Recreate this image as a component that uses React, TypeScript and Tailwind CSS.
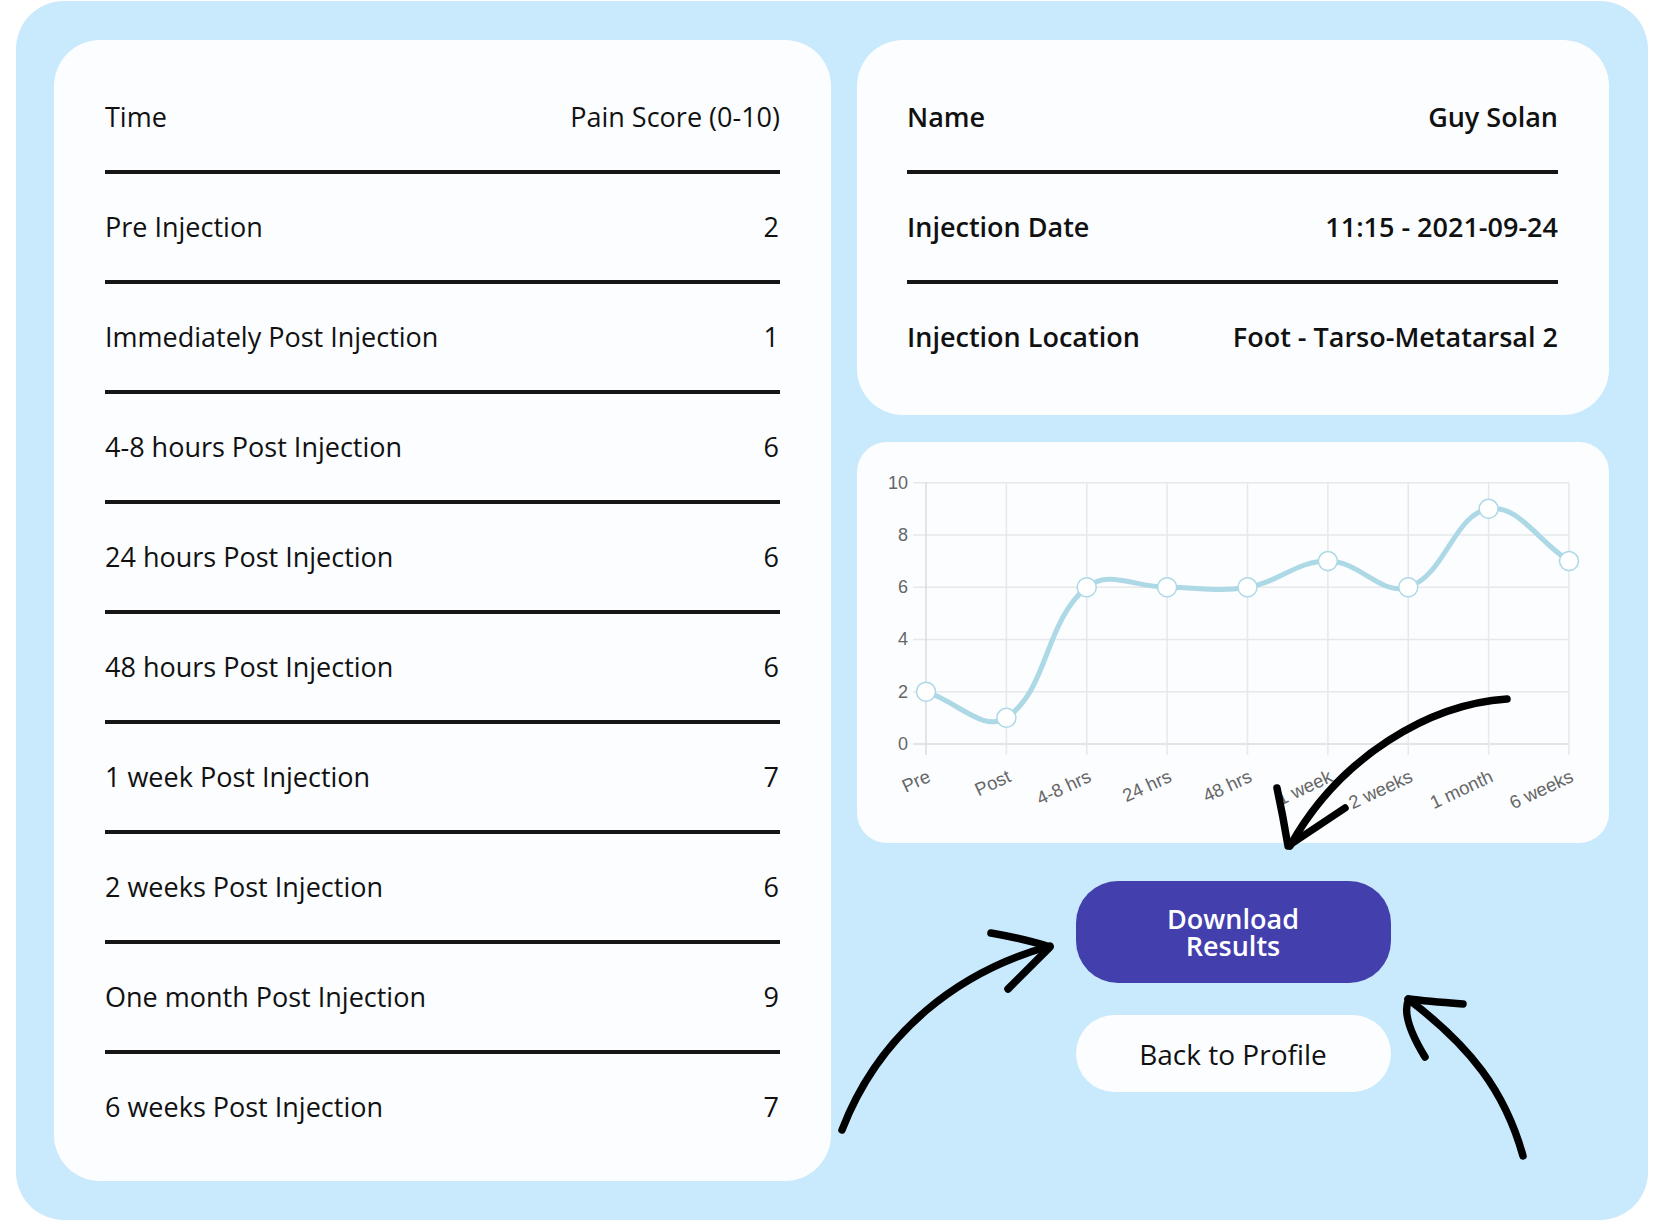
import React from "react";

type Row = { label: string; score: number };

const ROWS: Row[] = [
  { label: "Pre Injection", score: 2 },
  { label: "Immediately Post Injection", score: 1 },
  { label: "4-8 hours Post Injection", score: 6 },
  { label: "24 hours Post Injection", score: 6 },
  { label: "48 hours Post Injection", score: 6 },
  { label: "1 week Post Injection", score: 7 },
  { label: "2 weeks Post Injection", score: 6 },
  { label: "One month Post Injection", score: 9 },
  { label: "6 weeks Post Injection", score: 7 },
];

const INFO = [
  { label: "Name", value: "Guy Solan" },
  { label: "Injection Date", value: "11:15 - 2021-09-24" },
  { label: "Injection Location", value: "Foot - Tarso-Metatarsal 2" },
];

const LABELS = ["Pre", "Post", "4-8 hrs", "24 hrs", "48 hrs", "1 week", "2 weeks", "1 month", "6 weeks"];

// chart geometry, in px relative to the chart card
const X0 = 69;
const STEP_X = 80.375;
const Y0 = 302;
const UNIT_Y = 26.13;

type Pt = { x: number; y: number };

function controlPoints(prev: Pt, cur: Pt, next: Pt, t: number) {
  const d01 = Math.hypot(cur.x - prev.x, cur.y - prev.y);
  const d12 = Math.hypot(next.x - cur.x, next.y - cur.y);
  const s01 = d01 + d12 === 0 ? 0 : d01 / (d01 + d12);
  const s12 = d01 + d12 === 0 ? 0 : d12 / (d01 + d12);
  const fa = t * s01;
  const fb = t * s12;
  return {
    before: { x: cur.x - fa * (next.x - prev.x), y: cur.y - fa * (next.y - prev.y) },
    after: { x: cur.x + fb * (next.x - prev.x), y: cur.y + fb * (next.y - prev.y) },
  };
}

function PainChart() {
  const pts: Pt[] = ROWS.map((r, i) => ({ x: X0 + i * STEP_X, y: Y0 - r.score * UNIT_Y }));
  const cps = pts.map((p, i) =>
    controlPoints(pts[i - 1] ?? p, p, pts[i + 1] ?? p, 0.4)
  );
  let d = `M${pts[0].x} ${pts[0].y}`;
  for (let i = 1; i < pts.length; i++) {
    const a = cps[i - 1].after;
    const b = cps[i].before;
    d += ` C${a.x} ${a.y} ${b.x} ${b.y} ${pts[i].x} ${pts[i].y}`;
  }
  const xEnd = X0 + 8 * STEP_X;

  return (
    <svg width="752" height="401" viewBox="0 0 752 401" className="block">
      {[0, 2, 4, 6, 8, 10].map((v) => (
        <g key={v}>
          <line
            x1={56}
            x2={xEnd}
            y1={Y0 - v * UNIT_Y}
            y2={Y0 - v * UNIT_Y}
            stroke={v === 0 ? "#d9dcdf" : "#e6e8ea"}
            strokeWidth={1.5}
          />
          <text
            x={51}
            y={Y0 - v * UNIT_Y}
            textAnchor="end"
            dominantBaseline="central"
            fontSize="18"
            fill="#666"
            fontFamily="'Liberation Sans', Arial, sans-serif"
          >
            {v}
          </text>
        </g>
      ))}
      {pts.map((p, i) => (
        <line
          key={i}
          x1={p.x}
          x2={p.x}
          y1={Y0 - 10 * UNIT_Y}
          y2={Y0 + 11}
          stroke={i === 0 ? "#d9dcdf" : "#e6e8ea"}
          strokeWidth={1.5}
        />
      ))}
      {LABELS.map((l, i) => (
        <text
          key={l}
          transform={`translate(${X0 + i * STEP_X + 3} ${Y0 + 31}) rotate(-25)`}
          textAnchor="end"
          dominantBaseline="central"
          fontSize="18.5"
          fill="#666"
          fontFamily="'Liberation Sans', Arial, sans-serif"
        >
          {l}
        </text>
      ))}
      <path d={d} fill="none" stroke="#add8e6" strokeWidth={5} strokeLinejoin="round" />
      {pts.map((p, i) => (
        <circle key={i} cx={p.x} cy={p.y} r={9.5} fill="#fff" stroke="#add8e6" strokeWidth={1.5} />
      ))}
    </svg>
  );
}

function Arrows() {
  return (
    <svg
      className="absolute left-0 top-0 pointer-events-none"
      width="1660"
      height="1224"
      viewBox="0 0 1660 1224"
      fill="none"
      stroke="#000"
      strokeWidth={7.5}
      strokeLinecap="round"
      strokeLinejoin="round"
    >
      {/* chart -> download */}
      <path d="M1507 698 C1430 703 1340 755 1290 845" />
      <path d="M1277 787 Q1283 815 1288 845 L1345 807" />
      {/* bottom left -> download */}
      <path d="M842 1129 C880 1030 960 970 1050 945" />
      <path d="M991 932 Q1025 938 1050 946 L1008 988" />
      {/* bottom right -> download */}
      <path d="M1523 1155 C1505 1090 1470 1045 1408 998" />
      <path d="M1463 1003 Q1425 1000 1409 998 Q1400 1015 1425 1056" />
    </svg>
  );
}

const rowCls = "flex items-center justify-between text-[27px]";

export default function App() {
  return (
    <div
      className="relative w-[1660px] h-[1224px] bg-white text-[#111]"
      style={{ fontFamily: "'Open Sans', 'Lato', sans-serif" }}
    >
      <div className="ml-4 mt-px w-[1632px] h-[1219px] rounded-[48px] bg-[#c9e9fc] flex gap-[26px] pl-[38px] pt-[39px]">
        {/* pain score table */}
        <div className="w-[777px] h-[1141px] rounded-[46px] bg-[#fbfdff] px-[51px] pt-6">
          <div className={`${rowCls} h-[110px] border-b-4 border-[#161616] font-medium`}>
            <span>Time</span>
            <span>Pain Score (0-10)</span>
          </div>
          {ROWS.map((r, i) => (
            <div
              key={r.label}
              className={
                i === ROWS.length - 1
                  ? `${rowCls} h-[106px] font-medium`
                  : `${rowCls} h-[110px] border-b-4 border-[#161616] font-medium`
              }
            >
              <span>{r.label}</span>
              <span className="pr-px">{r.score}</span>
            </div>
          ))}
        </div>

        {/* right column */}
        <div className="w-[752px] flex flex-col">
          <div className="h-[375px] rounded-[46px] bg-[#fbfdff] pl-[50px] pr-[51px] pt-6">
            {INFO.map((r, i) => (
              <div
                key={r.label}
                className={
                  i === INFO.length - 1
                    ? `${rowCls} h-[106px] font-semibold`
                    : `${rowCls} h-[110px] border-b-4 border-[#161616] font-semibold`
                }
              >
                <span>{r.label}</span>
                <span>{r.value}</span>
              </div>
            ))}
          </div>

          <div className="mt-[27px] h-[401px] rounded-[30px] bg-[#fbfdff] overflow-hidden">
            <PainChart />
          </div>

          <div className="mt-[38px] flex flex-col items-center gap-8">
            <button className="w-[315px] h-[102px] rounded-[42px] bg-[#4340ad] text-white text-[27px] leading-[27px] font-semibold flex flex-col items-center justify-center">
              <span>Download</span>
              <span>Results</span>
            </button>
            <button className="w-[315px] h-[77px] rounded-full bg-[#fbfdff] text-[28px] font-medium text-[#111]">
              Back to Profile
            </button>
          </div>
        </div>
      </div>
      <Arrows />
    </div>
  );
}
